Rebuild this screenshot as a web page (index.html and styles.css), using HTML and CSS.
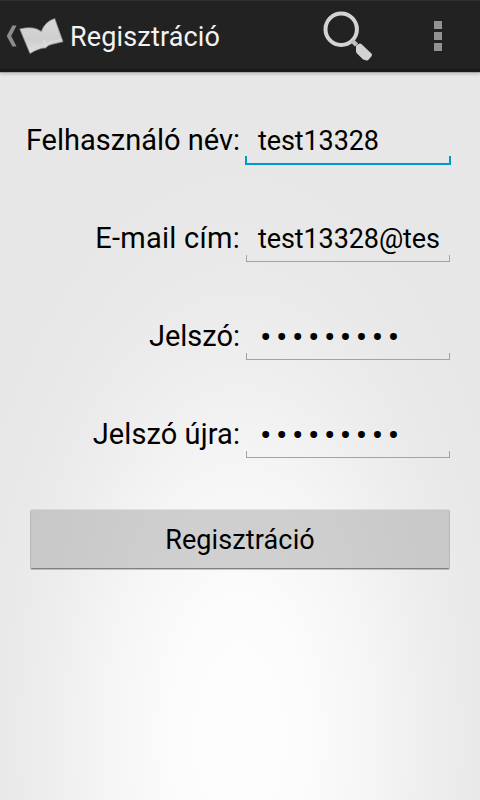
FILE: index.html
```html
<!DOCTYPE html>
<html lang="hu">
<head>
<meta charset="utf-8">
<title>Regisztráció</title>
<link rel="stylesheet" href="styles.css">
</head>
<body>
<header class="bar">
  <svg class="up" width="12" height="24" viewBox="0 0 12 24"><path d="M6.400 1.500h4.200L5.200 12l5.400 10.500H6.400L.7 12z" fill="#8c8c8c"/></svg>
  <svg class="book" width="48" height="48" viewBox="0 0 48 48">
    <defs><linearGradient id="page" x1="0" y1="0" x2="0" y2="1"><stop offset="0" stop-color="#d8d8d8"/><stop offset=".6" stop-color="#cecece"/><stop offset="1" stop-color="#e0e0e0"/></linearGradient></defs>
    <path d="M3.800 17Q18 13.500 25.300 19.500Q29 9.500 38.700 6.600L47 29.700Q41.500 31 36 32.300Q32 33 29.500 36Q24 35.500 14 41.500z" fill="url(#page)" stroke="#959595" stroke-width=".7"/>
    <path d="M28.300 28Q28.500 31 29.500 34.500" fill="none" stroke="#e6e6e6" stroke-width="1"/>
    <path d="M13.500 37.500Q22 32 29 33.500Q32 29.500 45.500 27.500" fill="none" stroke="#dcdcdc" stroke-width="1"/>
  </svg>
  <h1 class="title">Regisztráció</h1>
  <svg class="search" width="54" height="54" viewBox="0 0 54 54">
    <circle cx="21.200" cy="20.200" r="15.700" fill="none" stroke="#d3d3d3" stroke-width="4"/>
    <path d="M32 31.500l4.500 4.500" stroke="#bfbfbf" stroke-width="4.500"/>
    <path d="M40 36.500L50 46L47 49.500L44 48.500L38 42.500V37.500z" fill="#d3d3d3" stroke="#d3d3d3" stroke-width="4" stroke-linejoin="round"/>
  </svg>
  <div class="more"><i></i><i></i><i></i></div>
</header>
<main class="content">
  <div class="row"><span class="label">Felhasználó név:</span><div class="field focused"><span class="value">test13328</span></div></div>
  <div class="row"><span class="label wider">E-mail cím:</span><div class="field"><span class="value">test13328@tes</span></div></div>
  <div class="row"><span class="label">Jelszó:</span><div class="field"><span class="value dots">•••••••••</span></div></div>
  <div class="row"><span class="label wide">Jelszó újra:</span><div class="field"><span class="value dots">•••••••••</span></div></div>
  <button class="submit">Regisztráció</button>
</main>
</body>
</html>
```
FILE: styles.css
```css
* { box-sizing: border-box; }
body {
  margin: 0;
  height: 800px;
  overflow: hidden;
  font-family: Roboto, sans-serif;
  color: #000;
  background: radial-gradient(ellipse 280px 560px at 240px 735px, #fdfdfd 0, #fcfcfc 22%, #f5f5f5 48%, #ededed 70%, #e9e9e9 86%, #e7e7e7 100%);
}
.bar {
  display: flex;
  align-items: flex-start;
  height: 72px;
  background: #222;
  border-top: 1px solid #303030;
  border-bottom: 3px solid #191919;
  box-shadow: 0 1px 0 #a9a9a9, 0 2px 3px rgba(0, 0, 0, .2);
}
.up { margin: 23px 0 0 6px; }
.book { margin: 11px 0 0 -2px; }
.title {
  margin: 20px 0 0 6px;
  width: 152px;
  font-size: 27px;
  line-height: 32px;
  font-weight: 400;
  letter-spacing: .15px;
  color: #f3f3f3;
  white-space: nowrap;
}
.search { margin: 8px 0 0 98px; }
.more {
  display: flex;
  flex-direction: column;
  gap: 3px;
  margin: 20px 0 0 60px;
}
.more i { width: 8px; height: 8px; background: #929292; }
.content { padding: 44px 29px 0 15px; }
.row {
  display: flex;
  justify-content: flex-end;
  height: 50px;
  margin-bottom: 48px;
}
.label {
  margin-right: 5px;
  font-size: 29px;
  line-height: 48px;
  white-space: nowrap;
}
.wide { letter-spacing: .08px; }
.wider { letter-spacing: .27px; }
.field {
  position: relative;
  width: 206px;
  height: 49px;
  padding: 0 12px 0 13px;
  white-space: nowrap;
}
.field::after {
  content: "";
  position: absolute;
  left: 1px;
  right: 1px;
  bottom: 1px;
  height: 6px;
  border: 1px solid #a3a3a3;
  border-top: 0;
}
.focused::after {
  left: 0;
  right: 0;
  bottom: 0;
  height: 7px;
  border: 2px solid #0099cc;
  border-top: 0;
}
.value {
  display: block;
  font-size: 27px;
  line-height: 50px;
  letter-spacing: -.1px;
}
.dots {
  padding-left: 2px;
  font-size: 34px;
  line-height: 50px;
  letter-spacing: 4.500px;
}
.submit {
  display: block;
  width: 420px;
  height: 59px;
  margin: 50px 0 0 15px;
  padding: 2px 0 0;
  border: 0 solid rgba(0, 0, 0, .07);
  border-width: 0 1px;
  border-bottom: 1px solid #808080;
  border-radius: 2px;
  background: rgba(160, 160, 160, .46);
  box-shadow: 0 -1px 0 rgba(0, 0, 0, .08), 0 1px 0 rgba(0, 0, 0, .2);
  font: 27px/56px Roboto, sans-serif;
  letter-spacing: .12px;
  color: #000;
}
```
